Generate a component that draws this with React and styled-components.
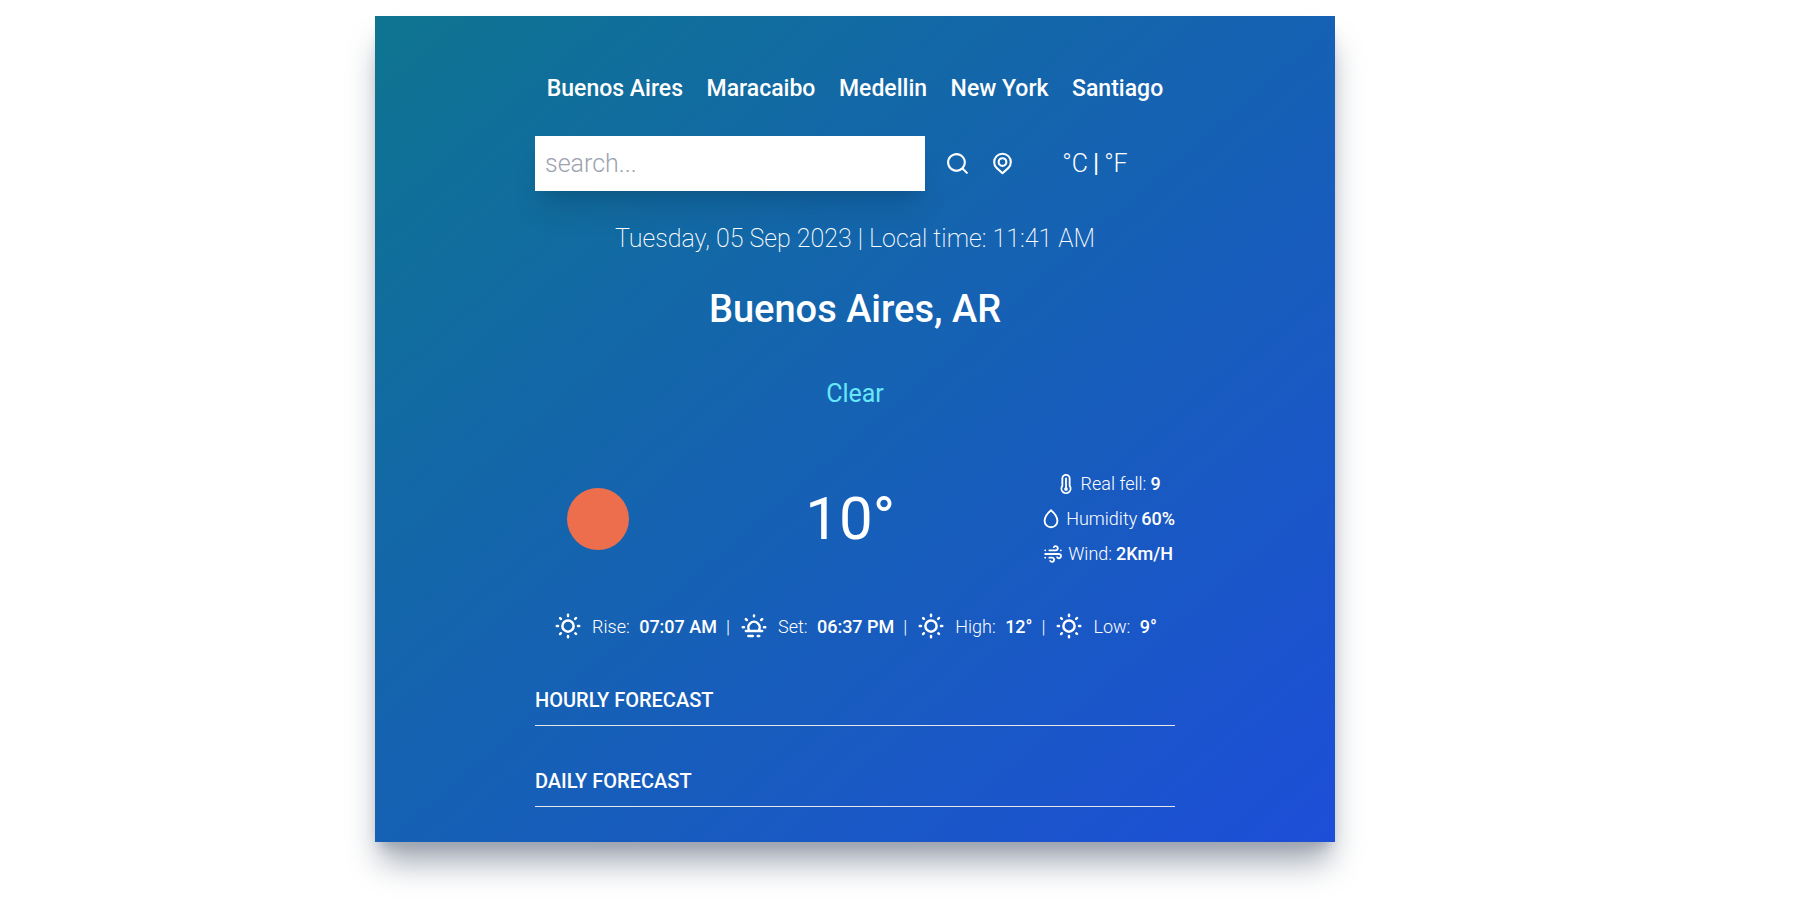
import React from "react";
import styled, { createGlobalStyle } from "styled-components";

const GlobalStyle = createGlobalStyle`
  *, *::before, *::after { box-sizing: border-box; }
  body {
    margin: 0;
    background: #fff;
    color: #fff;
    font-family: Roboto, "Liberation Sans", sans-serif;
    font-size: 20px;
    line-height: 30px;
  }
  button, input { font: inherit; color: inherit; border: 0; padding: 0; margin: 0; background: none; border-radius: 0; }
  button { cursor: pointer; }
  h1, h2, p, ul { margin: 0; padding: 0; font-size: inherit; font-weight: inherit; }
`;

const Page = styled.div`
  padding: 16px 86px 59px 0;
`;

const Card = styled.main`
  max-width: 960px;
  margin: 0 auto;
  padding: 55px 160px 25px;
  background: linear-gradient(to bottom right, #0e7490, #1d4ed8);
  box-shadow: 0 25px 31px -6px #9ca3af, 0 10px 12px -7px #9ca3af;
`;

const CityNav = styled.nav`
  display: flex;
  justify-content: space-around;
  align-items: center;
`;

const CityButton = styled.button`
  font-size: 23px;
  line-height: 35px;
  font-weight: 500;
`;

const SearchRow = styled.form`
  display: flex;
  margin-top: 30px;
`;

const SearchGroup = styled.div`
  flex: 3;
  display: flex;
  align-items: center;
  gap: 20px;
  min-width: 0;
`;

const SearchInput = styled.input`
  flex: 1;
  min-width: 0;
  height: 55px;
  padding: 10px;
  background: #fff;
  color: #111827;
  font-size: 25px;
  line-height: 35px;
  font-weight: 300;
  box-shadow: 0 25px 31px -6px rgba(0, 0, 0, 0.1), 0 10px 12px -7px rgba(0, 0, 0, 0.1);
  &::placeholder { color: #9ca3af; opacity: 1; }
`;

const IconButton = styled.button`
  display: flex;
  width: 25px;
  height: 25px;
`;

const Units = styled.div`
  flex: 1;
  display: flex;
  align-items: center;
  justify-content: center;
  gap: 5px;
  font-size: 25px;
  line-height: 35px;
`;

const UnitButton = styled.button`
  font-weight: 300;
`;

const DateLine = styled.p`
  margin-top: 30px;
  text-align: center;
  font-size: 25px;
  line-height: 35px;
  font-weight: 200;
`;

const Place = styled.h1`
  margin-top: 30px;
  text-align: center;
  font-size: 38px;
  line-height: 46px;
  font-weight: 500;
`;

const Condition = styled.p`
  padding: 44px 0 30px;
  text-align: center;
  color: #67e8f9;
  font-size: 25px;
  line-height: 35px;
`;

const Current = styled.section`
  display: flex;
  align-items: center;
  justify-content: space-between;
  padding: 15px 0;
`;

const WeatherIcon = styled.svg`
  display: block;
  width: 125px;
  height: 125px;
`;

const Temperature = styled.p`
  font-size: 60px;
  line-height: 60px;
`;

const Details = styled.ul`
  display: flex;
  flex-direction: column;
  gap: 10px;
  list-style: none;
`;

const Detail = styled.li`
  display: flex;
  align-items: center;
  justify-content: center;
  gap: 4px;
  font-size: 18px;
  line-height: 25px;
  font-weight: 300;
`;

const Glyph = styled.svg`
  display: block;
  flex: none;
  width: ${(p) => p.$size}px;
  height: ${(p) => p.$size}px;
  fill: ${(p) => (p.$outline ? "none" : "currentColor")};
  stroke: ${(p) => (p.$outline ? "currentColor" : "none")};
  stroke-width: 2;
  stroke-linecap: round;
  stroke-linejoin: round;
`;

const Value = styled.span`
  font-weight: 500;
  margin-left: ${(p) => p.$gap || 0}px;
`;

const SunTimes = styled.section`
  display: flex;
  align-items: center;
  justify-content: center;
  gap: 9px;
  padding: 15px 0 14px;
  font-size: 18px;
  line-height: 25px;
  font-weight: 300;
`;

const Forecast = styled.section`
  display: flex;
  flex-direction: column;
  gap: 10px;
  padding: 30px 0 10px;
`;

const ForecastTitle = styled.h2`
  font-weight: 500;
  text-transform: uppercase;
`;

const Rule = styled.hr`
  width: 100%;
  height: 1px;
  margin: 0;
  border: 0;
  background: #e5e7eb;
`;

const SUN =
  "M5.64,17l-.71.71a1,1,0,0,0,0,1.41,1,1,0,0,0,1.41,0l.71-.71A1,1,0,0,0,5.64,17ZM5,12a1,1,0,0,0-1-1H3a1,1,0,0,0,0,2H4A1,1,0,0,0,5,12Zm7-7a1,1,0,0,0,1-1V3a1,1,0,0,0-2,0V4A1,1,0,0,0,12,5ZM5.64,7.05a1,1,0,0,0,.7.29,1,1,0,0,0,.71-.29,1,1,0,0,0,0-1.41l-.71-.71A1,1,0,0,0,4.93,6.34Zm12,.29a1,1,0,0,0,.7-.29l.71-.71a1,1,0,1,0-1.41-1.41L17,5.64a1,1,0,0,0,0,1.41A1,1,0,0,0,17.66,7.34ZM21,11H20a1,1,0,0,0,0,2h1a1,1,0,0,0,0-2Zm-9,8a1,1,0,0,0-1,1v1a1,1,0,0,0,2,0V20A1,1,0,0,0,12,19ZM18.36,17A1,1,0,0,0,17,18.36l.71.71a1,1,0,0,0,1.41,0,1,1,0,0,0,0-1.41ZM12,6.5A5.5,5.5,0,1,0,17.5,12,5.51,5.51,0,0,0,12,6.5Zm0,9A3.5,3.5,0,1,1,15.5,12,3.5,3.5,0,0,1,12,15.5Z";

const SunIcon = () => (
  <Glyph $size={30} viewBox="0 0 24 24" aria-hidden="true"><path d={SUN} /></Glyph>
);

const SunsetIcon = () => (
  <Glyph $size={30} $outline viewBox="0 0 24 24" aria-hidden="true">
    <path d="M5.500 16h13M8.500 16a4.500 4.500 0 1 1 7 0M12 3.500v.7M3 13h1M20 13h1M5.500 6.500l.7.7M18.500 6.500l-.7.7M7.500 20h3.500M15 20h1.200" />
  </Glyph>
);

const SearchIcon = () => (
  <Glyph $size={25} viewBox="0 0 24 24" aria-hidden="true">
    <path d="M21.71,20.29,18,16.61A9,9,0,1,0,16.61,18l3.68,3.68a1,1,0,0,0,1.42,0A1,1,0,0,0,21.71,20.29ZM11,18a7,7,0,1,1,7-7A7,7,0,0,1,11,18Z" />
  </Glyph>
);

const PinIcon = () => (
  <Glyph $size={25} $outline viewBox="0 0 24 24" aria-hidden="true">
    <path d="M17.700 16.200L12 21.300l-5.700-5.100a8 8 0 1 1 11.400 0z" />
    <circle cx="12" cy="10.600" r="3.700" />
  </Glyph>
);

const ThermometerIcon = () => (
  <Glyph $size={22} $outline viewBox="0 0 24 24" aria-hidden="true">
    <path d="M16 14V6a4 4 0 0 0-8 0V14a5 5 0 1 0 8 0zM12 6v11" />
    <circle cx="12" cy="17.500" r="1" />
  </Glyph>
);

const DropIcon = () => (
  <Glyph $size={22} $outline viewBox="0 0 24 24" aria-hidden="true">
    <path d="M12 2.500C8.500 5.500 5 9.500 5 14a7 7 0 0 0 14 0c0-4.500-3.500-8.500-7-11.500z" />
  </Glyph>
);

const WindIcon = () => (
  <Glyph $size={22} $outline viewBox="0 0 24 24" aria-hidden="true">
    <path d="M8 8h7a2.300 2.300 0 1 0-2-3.500M3.500 8h.01M3.500 12H18.500a2.300 2.300 0 1 1-2 3.500M20.500 8h.01M3.500 16h.01M8 16h3a2.300 2.300 0 1 1-2 3.500" />
  </Glyph>
);

const cities = ["Buenos Aires", "Maracaibo", "Medellin", "New York", "Santiago"];

const details = [
  { Icon: ThermometerIcon, label: "Real fell:", value: "9" },
  { Icon: DropIcon, label: "Humidity", value: "60%" },
  { Icon: WindIcon, label: "Wind:", value: "2Km/H" },
];

const sunTimes = [
  { Icon: SunIcon, label: "Rise:", value: "07:07 AM" },
  { Icon: SunsetIcon, label: "Set:", value: "06:37 PM" },
  { Icon: SunIcon, label: "High:", value: "12°" },
  { Icon: SunIcon, label: "Low:", value: "9°" },
];

export default function App() {
  return (
    <Page>
      <GlobalStyle />
      <Card>
        <CityNav aria-label="Cities">
          {cities.map((city) => (
            <CityButton key={city} type="button">{city}</CityButton>
          ))}
        </CityNav>

        <SearchRow role="search" onSubmit={(e) => e.preventDefault()}>
          <SearchGroup>
            <SearchInput type="text" placeholder="search..." aria-label="Search for a city" />
            <IconButton type="submit" aria-label="Search"><SearchIcon /></IconButton>
            <IconButton type="button" aria-label="Use my location"><PinIcon /></IconButton>
          </SearchGroup>
          <Units>
            <UnitButton type="button">°C</UnitButton>
            <span>|</span>
            <UnitButton type="button">°F</UnitButton>
          </Units>
        </SearchRow>

        <DateLine>Tuesday, 05 Sep 2023 | Local time: 11:41 AM</DateLine>
        <Place>Buenos Aires, AR</Place>
        <Condition>Clear</Condition>

        <Current>
          <WeatherIcon viewBox="0 0 125 125" role="img" aria-label="Clear sky">
            <circle cx="63" cy="63" r="31" fill="#ec6e4c" />
          </WeatherIcon>
          <Temperature>10°</Temperature>
          <Details>
            {details.map(({ Icon, label, value }) => (
              <Detail key={label}>
                <Icon />
                <span>{label}</span>
                <Value>{value}</Value>
              </Detail>
            ))}
          </Details>
        </Current>

        <SunTimes>
          {sunTimes.map(({ Icon, label, value }, i) => (
            <React.Fragment key={label}>
              {i > 0 && <span>|</span>}
              <Icon />
              <p>{label} <Value $gap={5}>{value}</Value></p>
            </React.Fragment>
          ))}
        </SunTimes>

        <Forecast>
          <ForecastTitle>Hourly forecast</ForecastTitle>
          <Rule />
        </Forecast>
        <Forecast>
          <ForecastTitle>Daily forecast</ForecastTitle>
          <Rule />
        </Forecast>
      </Card>
    </Page>
  );
}
